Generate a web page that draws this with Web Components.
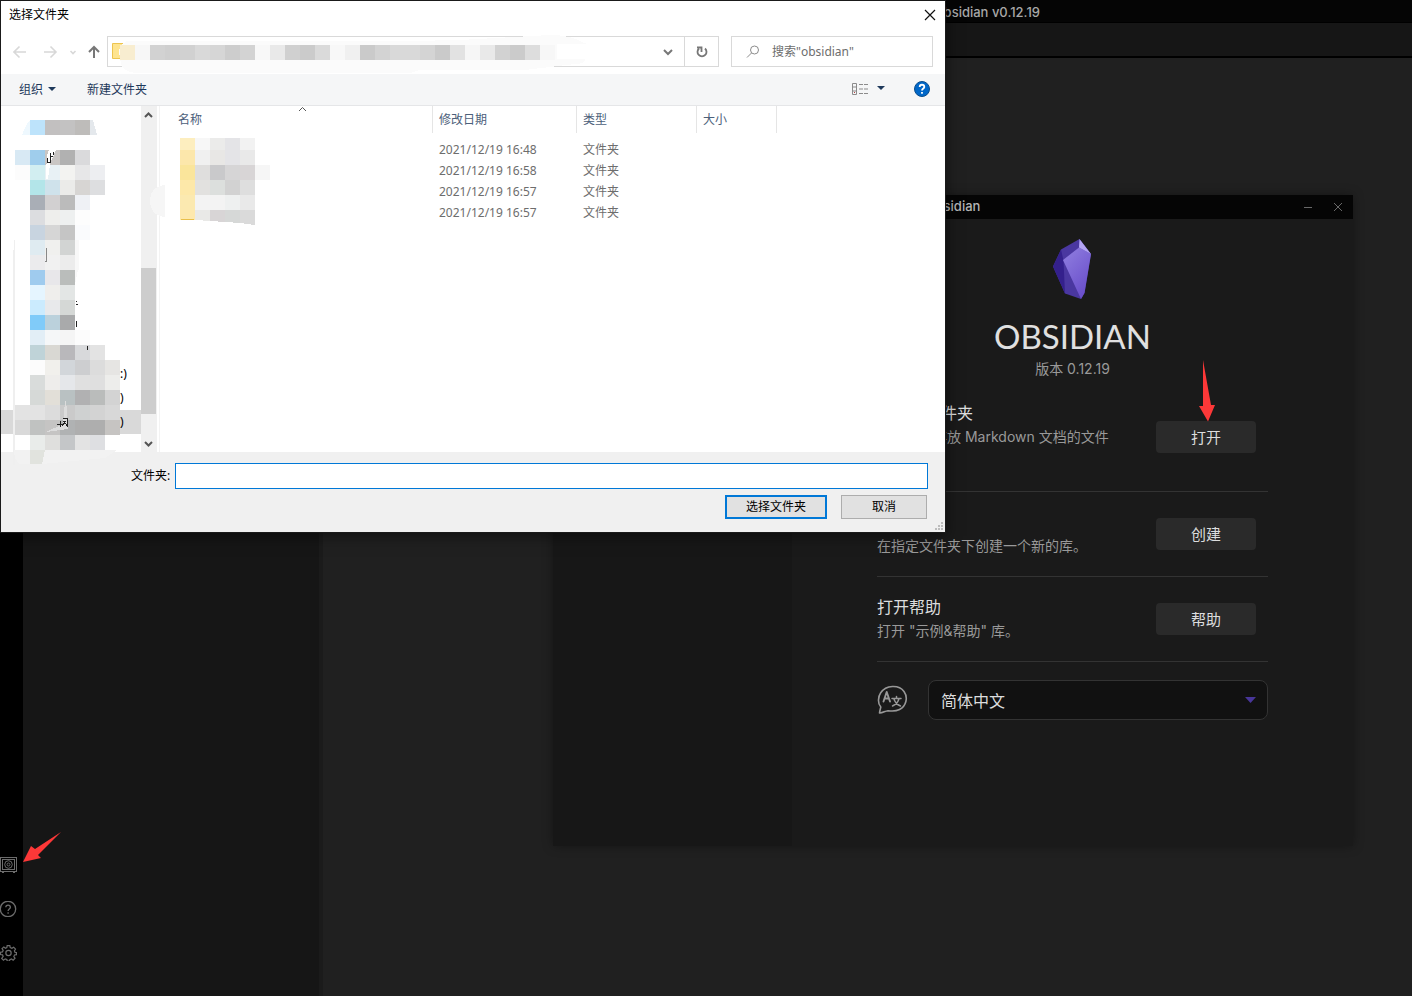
<!DOCTYPE html>
<html lang="zh-CN">
<head>
<meta charset="utf-8">
<title>Obsidian v0.12.19</title>
<style>
  html, body { margin: 0; height: 100%; }
  body { background: #202020; overflow: hidden; font-family: Inter, "Noto Sans CJK SC", sans-serif; }
</style>
</head>
<body>
<desktop-stage>
  <obsidian-workspace slot="base" heading="Obsidian v0.12.19"></obsidian-workspace>
  <vault-window slot="vault" heading="Obsidian">
    <vault-option heading="打开库文件夹" action="打开">选择一个存放 Markdown 文档的文件夹。</vault-option>
    <vault-option heading="" action="创建">在指定文件夹下创建一个新的库。</vault-option>
    <vault-option heading="打开帮助" action="帮助">打开 "示例&amp;帮助" 库。</vault-option>
    <language-picker slot="language"></language-picker>
  </vault-window>
  <folder-dialog slot="dialog" heading="选择文件夹"></folder-dialog>
  <pointer-arrow slot="arrow-open" kind="down"></pointer-arrow>
  <pointer-arrow slot="arrow-ribbon" kind="left"></pointer-arrow>
</desktop-stage>

<script>
class Base extends HTMLElement {
  connectedCallback() {
    if (this.shadowRoot) return;
    const root = this.attachShadow({ mode: 'open' });
    const t = document.createElement('template');
    t.innerHTML = this.render();
    root.append(t.content.cloneNode(true));
  }
}

/* Desktop that carries the floating windows */
customElements.define('desktop-stage', class extends Base {
  render() {
    return `<style>
      :host { display: block; position: relative; height: 100vh; overflow: hidden; }
      ::slotted([slot=vault]) { position: absolute; left: 553px; top: 195px; }
      ::slotted([slot=dialog]) { position: absolute; left: 0; top: 0; }
      ::slotted([slot=arrow-open]) { position: absolute; left: 1199px; top: 360px; }
      ::slotted([slot=arrow-ribbon]) { position: absolute; left: 23px; top: 832px; }
    </style>
    <slot name="base"></slot><slot name="vault"></slot><slot name="dialog"></slot>
    <slot name="arrow-open"></slot><slot name="arrow-ribbon"></slot>`;
  }
});

customElements.define('pointer-arrow', class extends Base {
  render() {
    const down = this.getAttribute('kind') === 'down';
    return `<style>:host { display: block; pointer-events: none; } svg { display: block; }</style>` + (down
      ? `<svg width="18" height="62" aria-hidden="true"><path d="M4 0 12 45h4L9 61.500 0 46h4z" fill="#fd3838"/></svg>`
      : `<svg width="40" height="31" aria-hidden="true"><path d="M38 0 12 17 8 14 0 30l18-4-3-3z" fill="#fd3838"/></svg>`);
  }
});

customElements.define('obsidian-workspace', class extends Base {
  render() {
    return `<style>
      :host { display: flex; flex-direction: column; height: 100%; background: #202020; }
      header { height: 22px; padding-right: 372px; background: #050505; border-bottom: 1px solid #000;
        color: #a8a8a8; font-size: 13px; font-weight: 500; line-height: 24px; text-align: right; }
      .tabs { height: 33px; background: #161616; border-bottom: 2px solid #000; }
      main { flex: 1; display: flex; }
      .ribbon { width: 23px; background: #000; display: flex; flex-direction: column; justify-content: flex-end;
        gap: 28px; padding-bottom: 35px; box-sizing: border-box; }
      .ribbon button { all: unset; display: block; width: 17px; height: 16px; color: #6c6c6c; }
      .ribbon svg { display: block; }
      .side { width: 296px; background: #161616; border-right: 4px solid #1b1b1b; }
    </style>
    <header>${this.getAttribute('heading')}</header>
    <div class="tabs"></div>
    <main>
      <nav class="ribbon">
        <button aria-label="打开其他库"><svg width="17" height="16" viewBox="0 0 17 16" fill="none" stroke="currentColor"><rect x=".5" y=".5" width="16" height="14"/><rect x="2.500" y="2.500" width="12" height="10"/><circle cx="8.500" cy="7.500" r="3.800"/><circle cx="8.500" cy="7.500" r="1.500"/><path d="M2.500 5v1.500M2.500 9v1.500M2 15.500h2M13 15.500h2"/></svg></button>
        <button aria-label="帮助"><svg width="17" height="16" viewBox="0 0 17 16" fill="none" stroke="currentColor" stroke-width="1.300"><circle cx="8" cy="8" r="7.700"/><path d="M5.800 6.300c0-3 4.600-3 4.600 0 0 1.700-2.300 1.800-2.300 3.600M8.100 11.200v1.500"/></svg></button>
        <button aria-label="设置"><svg width="17" height="16" viewBox="0 0 24 24" fill="none" stroke="currentColor" stroke-width="1.800"><circle cx="12" cy="12" r="4"/><path d="M10 1h4l.6 3 2.500 1 2.600-1.700 2.800 2.800L20.800 8.700l1 2.300 2.200.3v3.200l-3 .5-1 2.400 1.800 2.500-2.800 2.800-2.500-1.800-2.500 1-.5 2.100h-3.500l-.5-2.200-2.500-1-2.500 1.900-2.700-2.700L4 17.200l-1-2.400-3-.5v-3.500l3-.5 1-2.200-1.700-2.600 2.700-2.600L7.500 4.800 9.500 4z"/></svg></button>
      </nav>
      <aside class="side"></aside>
    </main>`;
  }
});

customElements.define('vault-window', class extends Base {
  render() {
    return `<style>
      :host { display: block; width: 800px; background: #1a1a1a; box-shadow: 0 0 10px rgba(0,0,0,.35); }
      header { position: relative; height: 24px; background: #050505; color: #b5b5b5; font-size: 13px;
        font-weight: 500; line-height: 23px; text-align: center; }
      .controls { position: absolute; right: 0; top: 0; display: flex; }
      .controls button { all: unset; width: 30px; height: 24px; }
      svg { display: block; }
      .body { display: grid; grid-template-columns: 239px 1fr; min-height: 627px; }
      aside { background: #171717; }
      .content { padding: 20px 85px 0; }
      .logo { margin: 0 auto; }
      h1 { margin: 19px 0 0; font: 400 33px/36px Lato, sans-serif; color: #e0e0e0; text-align: center; }
      .version { margin: 5px 0 20px; font-size: 14px; line-height: 20px; color: #999; text-align: center; }
      .lang { padding-top: 18px; }
    </style>
    <header>${this.getAttribute('heading')}
      <div class="controls">
        <button aria-label="最小化"><svg width="30" height="24" stroke="#686868"><path d="M11 12.500h8"/></svg></button>
        <button aria-label="关闭"><svg width="30" height="24" stroke="#686868"><path d="m11 8 8 8m0-8-8 8"/></svg></button>
      </div>
    </header>
    <div class="body">
      <aside></aside>
      <section class="content">
        <svg class="logo" width="40" height="60" viewBox="0 0 40 60" aria-hidden="true">
          <defs><linearGradient id="g" x1="0" y1="0" x2=".6" y2="1"><stop stop-color="#9180e0"/><stop offset="1" stop-color="#6a4fcb"/></linearGradient></defs>
          <path d="M26.500 0 38 15 31.500 54 28 60 12 54.500 0 27.500 8 10.500z" fill="#4a37a0"/>
          <path d="M8 10.500 0 27.500l12 27-1.500-33z" fill="#34208c"/>
          <path d="m10 21 16-12.500L38 15l-6.500 39L28 60z" fill="url(#g)"/>
          <path d="M26.500 0 26 8.500 38 15z" fill="#b3a4f4"/>
        </svg>
        <h1>OBSIDIAN</h1>
        <div class="version">版本 0.12.19</div>
        <slot></slot>
        <div class="lang"><slot name="language"></slot></div>
      </section>
    </div>`;
  }
});

customElements.define('vault-option', class extends Base {
  render() {
    return `<style>
      :host { display: flex; align-items: center; gap: 40px; padding: 18px 12px 18px 0; border-bottom: 1px solid #333; }
      :host(:first-of-type) { padding-top: 2px; }
      .text { flex: 1; line-height: 24px; }
      h2 { margin: 0; min-height: 24px; font-size: 16px; font-weight: 400; line-height: 24px; color: #dcddde; }
      p { margin: 0; font-size: 14px; line-height: 24px; color: #999; }
      button { width: 100px; height: 32px; padding: 0 0 2px; border: 0; border-radius: 4px; background: #2a2a2a;
        color: #dcddde; font: inherit; font-size: 15px; }
    </style>
    <div class="text"><h2>${this.getAttribute('heading')}</h2><p><slot></slot></p></div>
    <button>${this.getAttribute('action')}</button>`;
  }
});

customElements.define('language-picker', class extends Base {
  render() {
    return `<style>
      :host { display: flex; align-items: center; gap: 20px; }
      label { width: 31px; } label svg { display: block; }
      .field { flex: 1; position: relative; }
      select { display: block; width: 100%; height: 40px; box-sizing: border-box; appearance: none; padding: 2px 12px 0; margin: 0;
        border: 1px solid #333; border-radius: 8px; background: #111; color: #dcddde; font: inherit; font-size: 16px; }
      .caret { position: absolute; right: 12px; top: 17px; pointer-events: none; }
    </style>
    <label for="lang" aria-label="语言"><svg width="31" height="30" viewBox="0 0 31 30" fill="none" stroke="#989898" stroke-width="1.600" stroke-linecap="round" stroke-linejoin="round"><path d="M2.500 28c.3-2.300 1-4.500 1.300-6C.6 18.600.8 12 3.700 7.800 9-.2 22-.5 27 6.500c4.300 6 2.200 14.500-4.500 18-4.300 2.200-9 1.600-11.500 1.200C8 26 5.500 28.200 2.500 28z"/><path d="m6.500 16.500 3.200-9.500 3.300 9.500M7.500 13.500h4.500" stroke-width="1.900"/><path d="M15 13.500h9M19.500 11.500v2M22 13.500c-.8 3.500-3 6-6.500 7.500M16.800 13.500c1 3.500 3.500 6.200 6.700 7.500" stroke-width="1.500"/></svg></label>
    <div class="field">
      <select id="lang"><option>简体中文</option><option>English</option></select>
      <svg class="caret" width="11" height="7" aria-hidden="true"><path d="M0 0h11L5.500 6z" fill="#483699"/></svg>
    </div>`;
  }
});

/* Pixelated patches that hide private names; each row is "y height x colour colour ..." */
const PATCHES = [
  '45 15 120 f8edd0 f7f7f7 d2d2d2 cfcfcf d1d1d1 d9d9d9 d6d6d6 cdcdcd d3d3d3 f8f8f8 e9e9e9 d0d0d0 cbcbcb dadada f8f8f8 f0f0f0 cacaca d3d3d3 d9d9d9 d9d9d9 d4d4d4 cacaca e2e2e2 f6f6f6 e9e9e9 d2d2d2 cbcbcb dddddd f7f7f7',
  '120 15 30 bde3fb c2c0c0 c3c2c2 bebcba',
  '150 15 15 d8e9f4 9fcdec c9c6c4 b1b1b1 dadadc',
  '165 15 15 fcfcfc d2eef1 e8f1f5 f3f3f1 e7e7e8 edeef1',
  '180 15 30 b3e5e9 cfe2eb ebebe9 d7d5d3 dddee0',
  '195 15 30 a9aeb6 d2d0d1 bbbbbb eff1f5',
  '210 15 30 dcdde0 eeeeec eef0f0 fdfdfd',
  '225 15 30 c8d4e0 d6d6d6 c5c5c5 fafbfd',
  '240 15 30 dfebf1 f0f0ee d2d4d3',
  '255 15 30 ebebed f1f1f1 ececec',
  '270 15 30 9fcbee e8e7ea babdbb',
  '285 15 30 e5f5ff efeeec e3e6e5',
  '300 15 30 cbebfe e8e9eb d5d8d6',
  '315 15 30 80cbf9 bbd1dc a9aaab',
  '330 15 30 e2eef6 f5f7f8 f5f5f5 fcfcfc',
  '345 15 30 bfd3d8 d9d8d3 b9b8bb d8d9db e3e3e3',
  '360 15 30 fcfcfc f1f0ec d2d6da cdced0 dcdcdc e6e5e3',
  '375 15 30 d9dcdb eeedeb e5e7ea e0e0e0 dfdfdf ededeb',
  '390 15 30 d6d9d7 e2dfd8 b9c1c2 b1b1b2 babcbb d3d3d3',
  '405 15 15 e3e3e3 e3e3e3 dcdcdc cacaca cfd1d1 d3d3d3 d8d8d8',
  '420 15 15 d9d9d9 c0c2c1 c5c4c3 b0b2b3 aeaeae aeaeae c6c4c2',
  '435 15 30 e9ecea dfdfdd c4c6c8 e3e3e3 dedfe2',
  '138 12 180 fdeebf f7f7f7 ebebea e4e4e7 f2f2f2',
  '150 15 180 fce7ab f0f0f0 e8e7e5 e4e4e7 e9e9e9',
  '165 15 180 fae59b dfdedd c9c9cb d6d5d6 d8d5d6 f6f6f6',
  '180 15 180 fde8a9 e2e1df dcdfdd d2d2d2 dedede',
  '195 15 180 fbe9b0 f3f3f3 f3f3f3 eef0f0 e9e9e9'
];
customElements.define('privacy-mosaic', class extends Base {
  render() {
    const cells = PATCHES.map(row => {
      const [y, h, x, ...colours] = row.split(' ');
      return colours.map((c, i) => `<rect x="${+x + i * 15}" y="${y}" width="15" height="${h}" fill="#${c}"/>`).join('');
    }).join('');
    return `<style>:host { display: block; pointer-events: none; } svg { display: block; }</style>
    <svg width="600" height="480" shape-rendering="crispEdges" aria-hidden="true">
      <path d="M119 52q0-7 8-11h283l50-1 90-5q22 0 34 8l3 1h-30v15h28q0 5-10 5l-50 6H420l-10 3H140q-16 0-19-9z" fill="#fbfbfb"/>
      <path d="M22 135q3-9 8-15v15z" fill="#eef8fe"/><path d="M15 240h-1v10h-1v215h2z" fill="#efefef"/><path d="M90 120h3l4 15h-7z" fill="#e4e8ec"/>
      <path d="M75 240h4v30h-1l-3 15z" fill="#f8f8f8"/>
      <path d="M165 185q-15 2-15 16t15 16z" fill="#f6f6f6"/>
      <path d="M14 450h103l-12 8-63 6H20q-6-4-6-14z" fill="#f2f2f2"/>
      <path d="M30 450h15l-3 14H30z" fill="#e1e3de"/>
      ${cells}
      <path d="M180 210h15v10h-15z" fill="#fde8ad"/><path d="M181 219h13v1h-13z" fill="#e9bf4a"/>
      <path d="M195 210h15v11l-15-1z" fill="#e9e9e7"/><path d="M210 210h15v12l-15-1z" fill="#d8d5d6"/>
      <path d="M225 210h15v13l-15-1z" fill="#d6d8d7"/><path d="M240 210h15v15l-15-2z" fill="#dadada"/>
      <path d="M47 150h9l-6 14-2 15h-2z" fill="#fff"/>
      <path d="m65 401 1 0 1 10 1 18-22 3 17-8z" fill="#dcdcdc"/>
      <g fill="none" stroke="#222"><path d="M47.500 158v4h3v-9M50.500 156.500h2.500M53.500 152v3"/><path d="M46.500 248v13h-2" stroke="#888"/><path d="M57 424.500h6M60.500 421v6M63 418.500h5M67.500 418v8l-4-5M62 426l4-5M76 301v1M76 304.500h2M76.500 321v6M87.500 346v4"/></g>
      <path d="M45 150h4l-2 6h-2z" fill="#c9c6c4"/>
    </svg>`;
  }
});

customElements.define('file-table', class extends Base {
  render() {
    const rows = ['16:48', '16:58', '16:57', '16:57'].map(t =>
      `<tr><td></td><td>2021/12/19 ${t}</td><td>文件夹</td><td></td></tr>`).join('');
    return `<style>
      :host { display: block; position: relative; }
      table { border-collapse: separate; border-spacing: 0; table-layout: fixed; width: 617px; font-size: 12px; color: #6d6d6d; }
      th, td { box-sizing: border-box; padding: 0 0 0 6px; font-weight: 400; text-align: left; line-height: 21px; height: 21px; }
      th { height: 27px; border-right: 1px solid #e5e5e5; color: #4c607a; }
      th:first-child { padding-left: 18px; }
      tbody::before { content: ""; display: block; height: 6px; }
      svg { position: absolute; left: 138px; top: 0; }
    </style>
    <table>
      <colgroup><col style="width:273px"><col style="width:144px"><col style="width:120px"><col style="width:80px"></colgroup>
      <thead><tr><th>名称</th><th>修改日期</th><th>类型</th><th>大小</th></tr></thead>
      <tbody>${rows}</tbody>
    </table>
    <svg width="10" height="6" fill="none" stroke="#555" aria-hidden="true"><path d="m1 5 3.500-3.500L8 5"/></svg>`;
  }
});

customElements.define('folder-dialog', class extends Base {
  render() {
    return `<style>
      :host { display: block; width: 944px; border: 1px solid #1a1a1a; background: #fff; color: #000; font: 12px/16px "Noto Sans", "Noto Sans CJK SC", sans-serif;
        box-shadow: 0 3px 14px rgba(0,0,0,.5); }
      svg { display: block; }
      button { font: inherit; color: inherit; padding: 0; margin: 0; }
      .plain { border: 0; background: none; }
      header { display: flex; justify-content: space-between; align-items: center; height: 28px; padding: 0 8px; }
      .nav { display: flex; align-items: center; height: 31px; padding: 7px 12px; }
      .arrows { display: flex; align-items: center; width: 106px; }
      .address { flex: 1; display: flex; align-items: center; box-sizing: border-box; height: 31px; border: 1px solid #d9d9d9; margin-left: -12px; }
      .address .place { flex: 1; padding-left: 4px; }
      .address .refresh { height: 29px; width: 34px; border-left: 1px solid #d9d9d9; }
      .search { display: flex; align-items: center; box-sizing: border-box; width: 202px; height: 31px; margin-left: 12px; padding-left: 14px; border: 1px solid #d9d9d9; gap: 12px; }
      .search input { flex: 1; min-width: 0; border: 0; padding: 0; outline: 0; font: inherit; background: none; }
      .search input::placeholder { color: #6d6d6d; opacity: 1; }
      .tools { display: flex; align-items: center; height: 31px; padding: 0 14px 0 18px; background: #f5f6f7; border-bottom: 1px solid #e5e6e8; color: #1e395b; }
      .tools button { display: flex; align-items: center; gap: 5px; }
      .tools .new { margin-left: 31px; } .tools .view { margin-left: auto; gap: 8px; } .tools .help { margin-left: 28px; }
      .tools .view, .tools .help { padding-bottom: 2px; }
      .panes { display: grid; grid-template-columns: 140px 16px 3px 1fr; height: 346px; }
      .tree { display: flex; flex-direction: column; justify-content: flex-end; padding-bottom: 18px; box-sizing: border-box; }
      .tree div { height: 24px; line-height: 24px; padding-left: 119px; }
      .tree .on { background: #d9d9d9; }
      .bar { background: #f0f0f0; display: flex; flex-direction: column; }
      .thumb { width: 15px; height: 146px; margin-top: 144px; background: #cdcdcd; }
      .down { margin-top: auto; }
      .split { border-right: 1px solid #f3f3f3; }
      .foot { background: #f0f0f0; padding: 11px 17px 13px 130px; }
      .name { display: flex; align-items: center; gap: 5px; }
      .name label { width: 39px; white-space: nowrap; }
      .name input { flex: 1; height: 26px; box-sizing: border-box; border: 1px solid #0078d7; background: #fff; outline: 0; padding: 0 4px; font: inherit; }
      .acts { display: flex; justify-content: flex-end; gap: 14px; margin: 6px 1px 0 0; }
      .acts button { height: 24px; width: 86px; border: 1px solid #adadad; background: #e1e1e1; line-height: 20px; }
      .acts .ok { width: 102px; border: 2px solid #0078d7; }
      .grip { position: absolute; right: 2px; bottom: 2px; }
      privacy-mosaic { position: absolute; left: -1px; top: -1px; }
    </style>
    <header><span>${this.getAttribute('heading')}</span>
      <button class="plain" aria-label="关闭"><svg width="14" height="14" fill="none" stroke="#111" stroke-width="1.200"><path d="m2 2 10 10M12 2 2 12"/></svg></button></header>
    <div class="nav">
      <svg class="arrows" width="106" height="30" fill="none" stroke="#d8d8d8" stroke-width="1.600" aria-hidden="true"><path d="M13 15H1M6.500 9.500 1 15l5.500 5.500M31 15h12M37.500 9.500 43 15l-5.500 5.500M57.500 14l2.500 2.500 2.500-2.500"/><path d="M81 21V10M76 15l5-5 5 5" stroke="#777" stroke-width="2"/></svg>
      <div class="address">
        <div class="place"><svg width="12" height="17" aria-hidden="true"><path d="M.5.5h11v15H.5z" fill="#fee48f" stroke="#edc44f"/></svg></div>
        <button class="plain" aria-label="历史位置"><svg width="34" height="29" fill="none" stroke="#777" stroke-width="2"><path d="m14 13 4 4 4-4"/></svg></button>
        <button class="plain refresh" aria-label="刷新"><svg width="34" height="29" fill="none" stroke="#777" stroke-width="1.800"><path d="M20 11.500a4.500 4.500 0 1 1-6 0"/><path d="M12 10.500h4.500v4.500"/></svg></button>
      </div>
      <div class="search">
        <svg width="14" height="14" fill="none" stroke="#8c8c8c" aria-hidden="true"><circle cx="8.500" cy="5" r="4"/><path d="M5.500 8 1 12.500"/></svg>
        <input type="search" aria-label="搜索" placeholder='搜索"obsidian"'>
      </div>
    </div>
    <div class="tools">
      <button class="plain">组织<svg width="8" height="5" aria-hidden="true"><path d="M0 0h8L4 4z" fill="#1e395b"/></svg></button>
      <button class="plain new">新建文件夹</button>
      <button class="plain view" aria-label="更改视图"><svg width="18" height="14" fill="none" stroke="#8b8b8b"><path d="M1.500 1.500h4v11h-4zM1.500 5h4M1.500 9h4M8 2.500h4m1 0h4M8 7h4m1 0h4M8 11.500h4m1 0h4"/><path d="M3 10.500h1" stroke="#b44"/></svg><svg width="8" height="5"><path d="M0 0h8L4 4z" fill="#1e395b"/></svg></button>
      <button class="plain help" aria-label="帮助"><svg width="18" height="18"><circle cx="9" cy="9" r="7.500" fill="#0067c8" stroke="#0a4d8c"/><path d="M6.700 7c0-3 4.600-3 4.600 0 0 1.500-2.300 1.600-2.300 3.500M9 12v1.800" fill="none" stroke="#fff" stroke-width="1.800"/></svg></button>
    </div>
    <div class="panes">
      <div class="tree"><div>:)</div><div>)</div><div class="on">)</div></div>
      <div class="bar">
        <svg width="16" height="18" fill="none" stroke="#555" stroke-width="2" aria-hidden="true"><path d="m4 11 3.500-3.500L11 11"/></svg>
        <div class="thumb"></div>
        <svg class="down" width="16" height="18" fill="none" stroke="#555" stroke-width="2" aria-hidden="true"><path d="m4 8 3.500 3.500L11 8"/></svg>
      </div>
      <div class="split"></div>
      <file-table></file-table>
    </div>
    <div class="foot">
      <div class="name"><label for="folder">文件夹:</label><input id="folder" type="text"></div>
      <div class="acts"><button class="ok">选择文件夹</button><button>取消</button></div>
    </div>
    <svg class="grip" width="8" height="8" fill="#bdbdbd" aria-hidden="true"><path d="M6 0h2v2H6zM3 3h2v2H3zM6 3h2v2H6zM0 6h2v2H0zM3 6h2v2H3zM6 6h2v2H6z"/></svg>
    <privacy-mosaic></privacy-mosaic>`;
  }
});
</script>
</body>
</html>
